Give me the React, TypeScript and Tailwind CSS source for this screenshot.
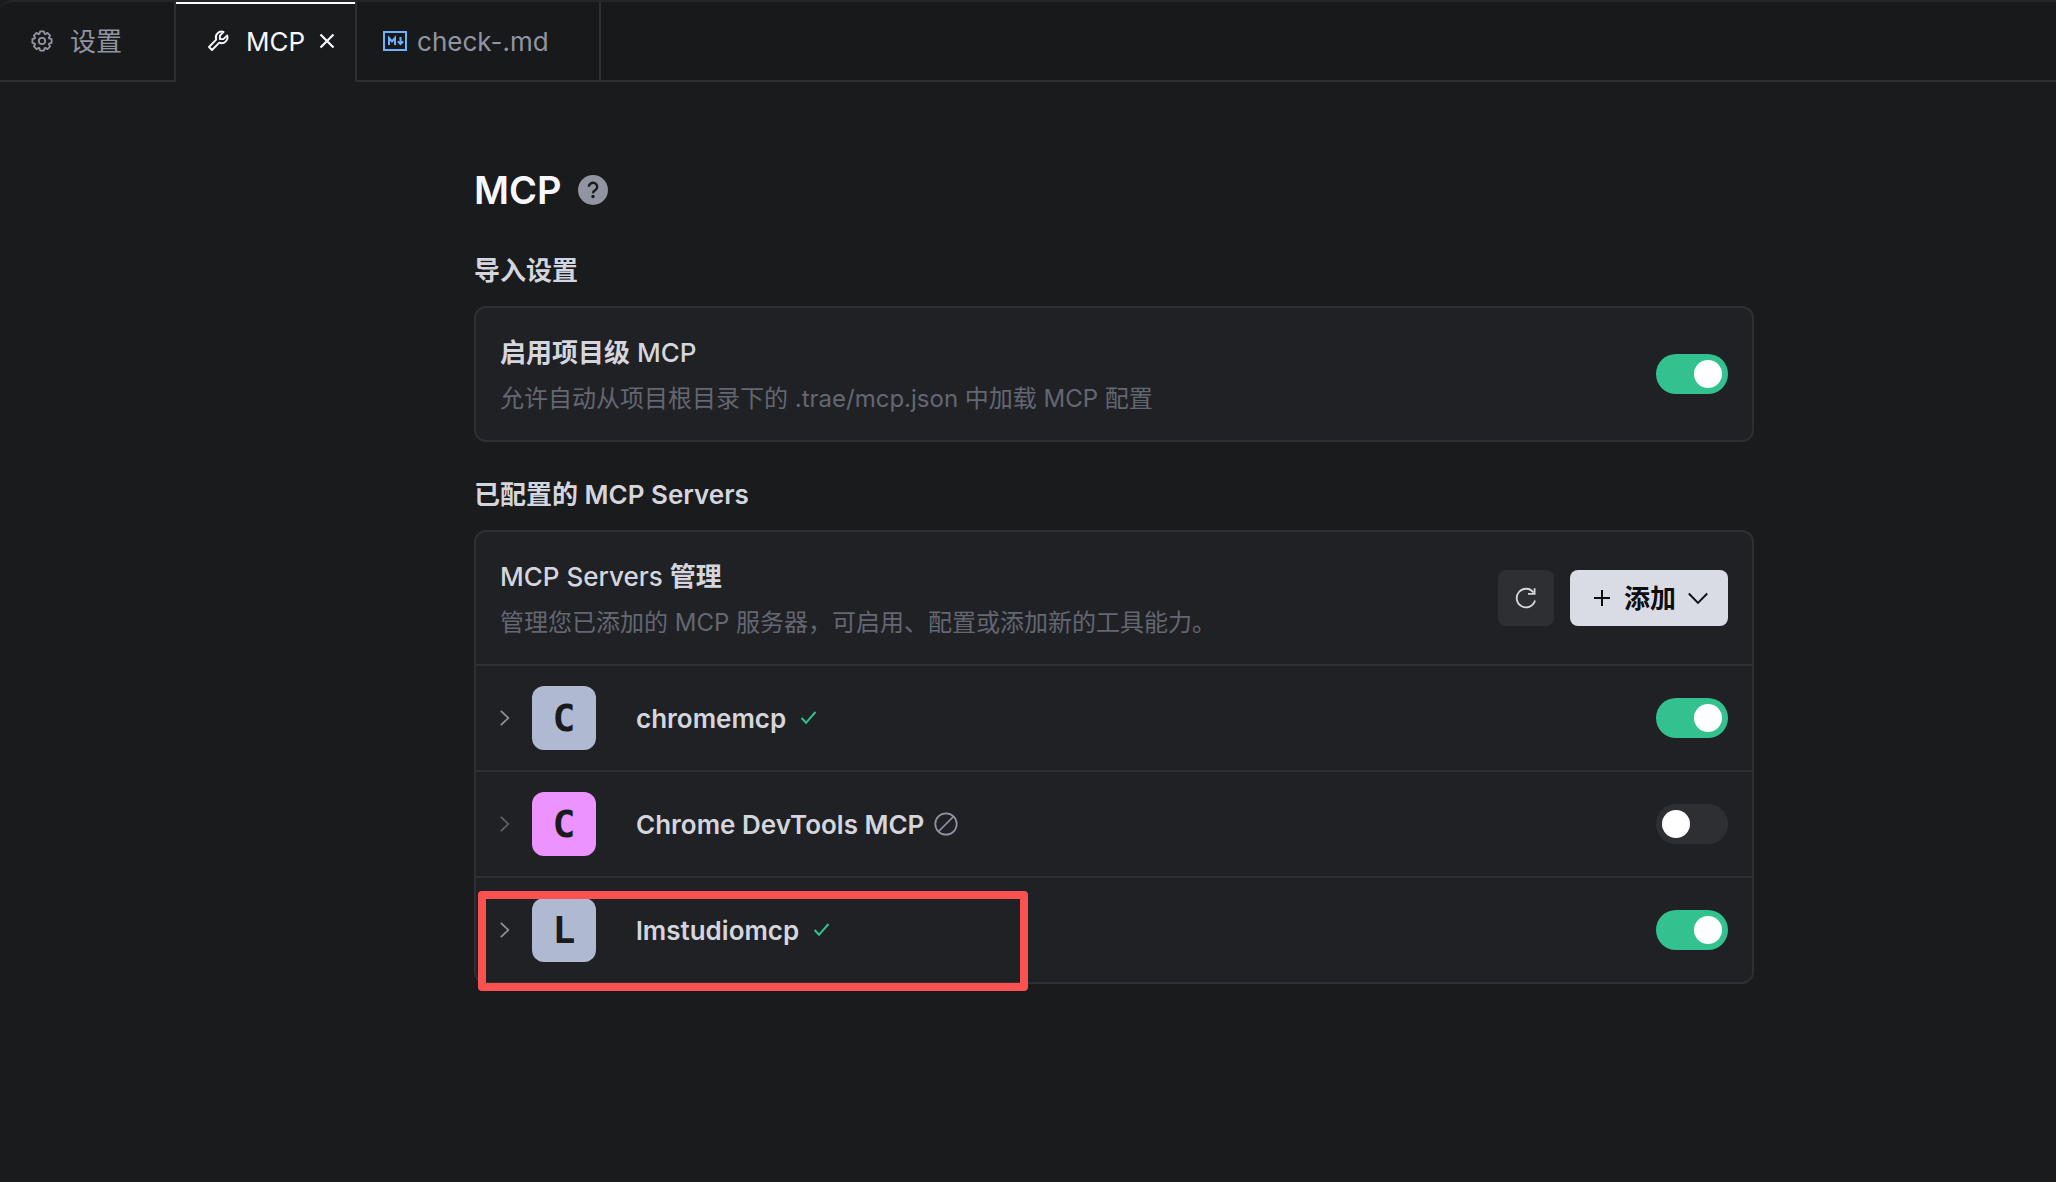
import { useState } from "react";
import type { ReactNode } from "react";

type Server = {
  name: string;
  color: string;
  enabled: boolean;
};

const initialServers: Server[] = [
  { name: "chromemcp", color: "bg-[#afb9d1]", enabled: true },
  { name: "Chrome DevTools MCP", color: "bg-[#ec93ff]", enabled: false },
  { name: "lmstudiomcp", color: "bg-[#afb9d1]", enabled: true },
];

// outline of the gear, eight teeth round the centre
const gearPoints = Array.from({ length: 8 }, (_, i) =>
  [
    [-20, 7.6],
    [-11, 9.8],
    [11, 9.8],
    [20, 7.6],
  ].map(([offset, r]) => {
    const a = ((i * 45 + offset) * Math.PI) / 180;
    return `${(12 + r * Math.sin(a)).toFixed(2)},${(12 - r * Math.cos(a)).toFixed(2)}`;
  })
)
  .flat()
  .join(" ");

function GearIcon() {
  return (
    <svg
      className="size-6"
      viewBox="0 0 24 24"
      fill="none"
      stroke="currentColor"
      strokeWidth="1.8"
      strokeLinejoin="round"
    >
      <polygon points={gearPoints} />
      <circle cx="12" cy="12" r="3.2" />
    </svg>
  );
}

function WrenchIcon() {
  return (
    <svg
      className="size-6"
      viewBox="0 0 24 24"
      fill="none"
      stroke="currentColor"
      strokeWidth="1.9"
      strokeLinejoin="round"
    >
      <path d="M17.6 2.9 13.9 6.6v3.5h3.5l3.8-3.7a5.9 5.9 0 0 1-7.9 7.3L6 21 3 18l7.2-7.4a5.9 5.9 0 0 1 7.4-7.7Z" />
    </svg>
  );
}

function MarkdownIcon() {
  return (
    <svg className="h-5 w-6" viewBox="0 0 24 20" fill="none">
      <rect
        x="1"
        y="1"
        width="22"
        height="18"
        stroke="#6cb2ff"
        strokeWidth="2"
      />
      <path
        d="M6 14V7l3 3.4L12 7v7M17.5 6v7M14.8 10.4l2.7 2.7 2.7-2.7"
        stroke="#6cb2ff"
        strokeWidth="2"
      />
    </svg>
  );
}

function ChevronRight() {
  return (
    <svg
      className="h-4 w-3"
      viewBox="0 0 12 16"
      fill="none"
      stroke="currentColor"
      strokeWidth="1.7"
    >
      <path d="M.8.8 8.3 8 .8 15.2" />
    </svg>
  );
}

function CheckIcon() {
  return (
    <svg
      className="size-6 text-[#32c18f]"
      viewBox="0 0 24 24"
      fill="none"
      stroke="currentColor"
      strokeWidth="2"
    >
      <path d="m5.6 12 4.400 4.800L19.500 6" />
    </svg>
  );
}

function BanIcon() {
  return (
    <svg
      className="size-6 text-[#9194a1]"
      viewBox="0 0 24 24"
      fill="none"
      stroke="currentColor"
      strokeWidth="1.7"
    >
      <circle cx="12" cy="12" r="10.7" />
      <path d="m4.500 19.500 15-15" />
    </svg>
  );
}

type SwitchProps = {
  label: string;
  checked: boolean;
  onChange: () => void;
};

function Switch({ label, checked, onChange }: SwitchProps) {
  return (
    <input
      type="checkbox"
      role="switch"
      aria-label={label}
      checked={checked}
      onChange={onChange}
      className="flex h-10 w-18 shrink-0 cursor-pointer appearance-none items-center rounded-full bg-[#2e2f33] px-1.5 before:size-7 before:rounded-full before:bg-white checked:justify-end checked:bg-[#32c18f]"
    />
  );
}

type CardTextProps = {
  title: ReactNode;
  children: ReactNode;
};

function CardText({ title, children }: CardTextProps) {
  return (
    <div className="min-w-0 space-y-2.5 pt-[27px] pb-[23px]">
      <h3 className="text-[26px] leading-9 font-medium text-[#d5d6dd]">
        {title}
      </h3>
      <p className="text-2xl leading-9 text-[#646772]">{children}</p>
    </div>
  );
}

function TabBar() {
  return (
    <nav className="flex h-[82px] rounded-tl-xl border-t-2 border-[#252629] bg-[#18191b] text-[26px]">
      <div className="flex border-r-2 border-b-2 border-[#2e2f33] pr-[52px] pl-[30px] text-[#9194a1]">
        <button className="flex items-center gap-4">
          <GearIcon />
          设置
        </button>
      </div>
      <div className="flex items-center border-t-2 border-white bg-[#1a1b1d] pr-[18px] pb-1 pl-[30px] text-[#f7f8ff]">
        <button className="flex items-center gap-4">
          <WrenchIcon />
          MCP
        </button>
        <button aria-label="关闭" className="ml-3">
          <svg
            className="size-5"
            viewBox="0 0 20 20"
            stroke="currentColor"
            strokeWidth="2.2"
          >
            <path d="m3.500 3.500 13 13M16.500 3.500l-13 13" />
          </svg>
        </button>
      </div>
      <div className="flex border-x-2 border-b-2 border-[#2e2f33] pr-[50px] pl-[26px] text-[#9194a1]">
        <button className="flex items-center gap-2.5">
          <MarkdownIcon />
          check-.md
        </button>
      </div>
      <div className="flex-1 border-b-2 border-[#2e2f33]" />
    </nav>
  );
}

function App() {
  const [projectMcp, setProjectMcp] = useState(true);
  const [servers, setServers] = useState(initialServers);

  const toggleServer = (name: string) => {
    setServers(
      servers.map((s) => (s.name === name ? { ...s, enabled: !s.enabled } : s))
    );
  };

  return (
    <div className="min-h-screen bg-[#1a1b1d] font-['Inter','Noto_Sans_CJK_SC',sans-serif]">
      <TabBar />
      <main className="pt-21 pb-10 pl-[172px]">
        <div className="mx-auto max-w-[1280px]">
          <div className="flex items-center gap-4">
            <h1 className="text-[38px] leading-12 font-semibold text-[#f7f8ff]">
              MCP
            </h1>
            <button
              aria-label="帮助"
              className="flex size-[30px] items-center justify-center rounded-full bg-[#9194a1] text-[#1a1b1d]"
            >
              <svg
                className="size-5"
                viewBox="0 0 20 20"
                fill="none"
                stroke="currentColor"
                strokeWidth="2.4"
              >
                <path d="M5.800 6.800a4.200 4 0 1 1 6.400 3.400c-1.500 1-2.200 1.400-2.200 3.100" />
                <circle
                  cx="10"
                  cy="16.500"
                  r="1.700"
                  fill="currentColor"
                  stroke="none"
                />
              </svg>
            </button>
          </div>

          <h2 className="mt-9 text-[26px] leading-[42px] font-semibold text-[#d5d6dd]">
            导入设置
          </h2>
          <section className="mt-3.5 flex items-center justify-between rounded-xl border-2 border-[#2e2f33] bg-[#202125] px-6">
            <CardText
              title={
                <>
                  <span className="font-semibold">启用项目级</span> MCP
                </>
              }
            >
              允许自动从项目根目录下的 .trae/mcp.json 中加载 MCP 配置
            </CardText>
            <Switch
              label="启用项目级 MCP"
              checked={projectMcp}
              onChange={() => setProjectMcp(!projectMcp)}
            />
          </section>

          <h2 className="mt-8 text-[26px] leading-[42px] font-semibold text-[#d5d6dd]">
            已配置的 MCP Servers
          </h2>
          <section className="mt-3.5 rounded-xl border-2 border-[#2e2f33] bg-[#202125]">
            <div className="flex items-center justify-between px-6">
              <CardText
                title={
                  <>
                    MCP Servers <span className="font-semibold">管理</span>
                  </>
                }
              >
                管理您已添加的 MCP 服务器，可启用、配置或添加新的工具能力。
              </CardText>
              <div className="flex shrink-0 gap-4">
                <button
                  aria-label="刷新"
                  className="flex size-14 items-center justify-center rounded-lg bg-[#2e2f33] text-[#d5d6dd]"
                >
                  <svg
                    className="size-6"
                    viewBox="0 0 24 24"
                    fill="none"
                    stroke="currentColor"
                    strokeWidth="1.8"
                  >
                    <path d="M21 14.500a9.300 9.300 0 1 1-1.500-8M20.600 2.200v5.600H14" />
                  </svg>
                </button>
                <button className="flex h-14 items-center gap-2.5 rounded-lg bg-[#dadce5] pr-[18px] pl-5 text-[26px] font-semibold text-[#0d0e10]">
                  <svg
                    className="size-6"
                    viewBox="0 0 24 24"
                    stroke="currentColor"
                    strokeWidth="2"
                  >
                    <path d="M4 12h16M12 4v16" />
                  </svg>
                  添加
                  <svg
                    className="size-6"
                    viewBox="0 0 24 24"
                    fill="none"
                    stroke="currentColor"
                    strokeWidth="1.9"
                  >
                    <path d="m2.800 7.500 9.200 9.300 9.200-9.300" />
                  </svg>
                </button>
              </div>
            </div>

            <ul>
              {servers.map((server, i) => (
                <li
                  key={server.name}
                  className="relative flex h-[106px] items-center border-t-2 border-[#2e2f33] px-6"
                >
                  <button
                    aria-label="展开"
                    className={
                      server.enabled ? "text-[#9194a1]" : "text-[#5f626c]"
                    }
                  >
                    <ChevronRight />
                  </button>
                  <div
                    className={`ml-5 flex size-16 items-center justify-center rounded-xl font-['DejaVu_Sans_Mono',monospace] text-[38px] font-bold text-[#1a1b1d] ${server.color}`}
                  >
                    {server.name[0].toUpperCase()}
                  </div>
                  <span className="mr-2.5 ml-10 text-[26px] font-semibold text-[#d5d6dd]">
                    {server.name}
                  </span>
                  {server.enabled ? <CheckIcon /> : <BanIcon />}
                  <div className="ml-auto">
                    <Switch
                      label={server.name}
                      checked={server.enabled}
                      onChange={() => toggleServer(server.name)}
                    />
                  </div>
                  {i === servers.length - 1 && (
                    <div className="pointer-events-none absolute top-[13px] left-0.5 h-[100px] w-[550px] rounded-sm border-8 border-[#fb5151]" />
                  )}
                </li>
              ))}
            </ul>
          </section>
        </div>
      </main>
    </div>
  );
}

export default App;
